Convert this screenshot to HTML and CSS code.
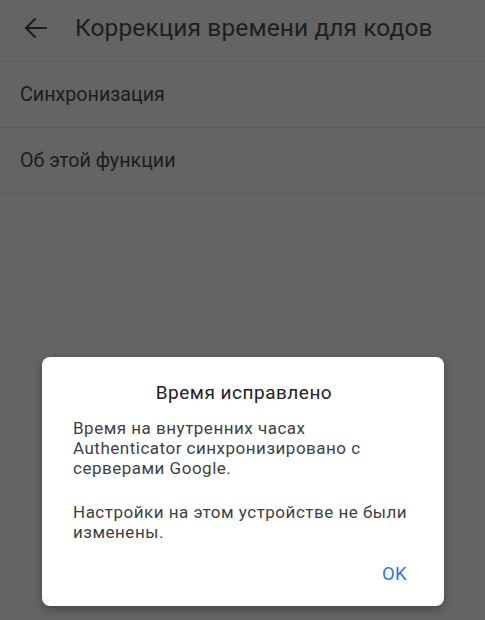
FILE: index.html
```html
<!DOCTYPE html>
<html lang="ru">
<head>
<meta charset="utf-8">
<title>Коррекция времени для кодов</title>
<link rel="stylesheet" href="styles.css">
</head>
<body>
<div class="screen">
  <header class="appbar">
    <span class="back">
      <svg width="24" height="22" viewBox="0 0 24 22"><path d="M23 11H2M11.5 1.5L2 11l9.5 9.5" fill="none" stroke="#1c1c1c" stroke-width="2.2"/></svg>
    </span>
    <h1 class="title">Коррекция времени для кодов</h1>
  </header>
  <div class="row">Синхронизация</div>
  <div class="row">Об этой функции</div>

  <div class="dialog">
    <h2 class="dlg-title">Время исправлено</h2>
    <p class="dlg-text">Время на внутренних часах Authenticator синхронизировано с серверами Google.</p>
    <p class="dlg-text second">Настройки на этом устройстве не были изменены.</p>
    <div class="actions"><span class="ok">OK</span></div>
  </div>
</div>
</body>
</html>
```
FILE: styles.css
```css
html, body {
  margin: 0;
  padding: 0;
  background: #646464;
}
.screen {
  width: 485px;
  height: 620px;
  position: relative;
  overflow: hidden;
  font-family: Roboto, "Noto Sans", sans-serif;
  color: #1e1e1e;
}
.appbar {
  display: flex;
  align-items: center;
  border-bottom: 1px solid #5b5b5b;
  padding-left: 24px;
  padding-bottom: 6px;
  box-sizing: border-box;
  height: 62px;
}
.back {
  display: flex;
  width: 24px;
  height: 22px;
}
.title {
  margin: 0 0 0 27px;
  font-size: 24.5px;
  font-weight: 400;
  color: #1e1e1e;
  letter-spacing: 0.1px;
}
.row {
  height: 66px;
  box-sizing: border-box;
  border-bottom: 1px solid #5b5b5b;
  display: flex;
  align-items: center;
  padding-left: 20px;
  font-size: 19.7px;
  color: #1c1c1c;
}
.dialog {
  position: absolute;
  left: 42px;
  top: 357px;
  width: 402px;
  height: 249px;
  box-sizing: border-box;
  background: #fff;
  border-radius: 8px;
  box-shadow: 0 3px 8px rgba(0,0,0,0.3);
  padding: 24px 30px 0 31px;
}
.dlg-title {
  margin: 0;
  text-align: center;
  font-size: 19px;
  letter-spacing: 0.5px;
  line-height: 24px;
  font-weight: 400;
  color: #222;
  padding-left: 1px;
}
.dlg-text {
  margin: 13px 0 0 0;
  font-size: 17px;
  letter-spacing: 0.5px;
  line-height: 20px;
  color: #3f3f3f;
}
.dlg-text.second {
  margin-top: 24px;
}
.actions {
  display: flex;
  justify-content: flex-end;
  margin-top: 14px;
  padding-right: 7px;
}
.ok {
  height: 36px;
  display: flex;
  align-items: center;
  font-size: 18.5px;
  font-weight: 400;
  letter-spacing: 0.3px;
  color: #2d79d8;
}
```
